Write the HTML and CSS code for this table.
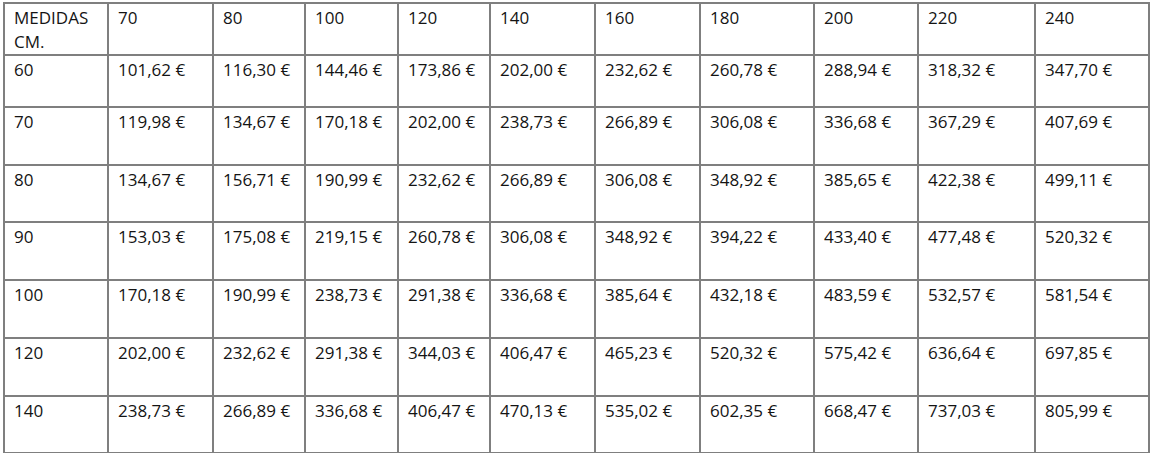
FILE: index.html
```html
<!DOCTYPE html>
<html lang="es">
<head>
<meta charset="utf-8">
<title>Medidas</title>
<link rel="stylesheet" href="styles.css">
</head>
<body>
<table class="prices">
  <colgroup>
    <col class="c104"><col class="c105"><col class="c92"><col class="c93"><col class="c92"><col class="c105"><col class="c105"><col class="c114"><col class="c104"><col class="c117"><col class="c114">
  </colgroup>
  <tr class="h52"><td>MEDIDAS CM.</td><td>70</td><td>80</td><td>100</td><td>120</td><td>140</td><td>160</td><td>180</td><td>200</td><td>220</td><td>240</td></tr>
  <tr class="h52"><td>60</td><td>101,62 €</td><td>116,30 €</td><td>144,46 €</td><td>173,86 €</td><td>202,00 €</td><td>232,62 €</td><td>260,78 €</td><td>288,94 €</td><td>318,32 €</td><td>347,70 €</td></tr>
  <tr class="h58"><td>70</td><td>119,98 €</td><td>134,67 €</td><td>170,18 €</td><td>202,00 €</td><td>238,73 €</td><td>266,89 €</td><td>306,08 €</td><td>336,68 €</td><td>367,29 €</td><td>407,69 €</td></tr>
  <tr class="h57"><td>80</td><td>134,67 €</td><td>156,71 €</td><td>190,99 €</td><td>232,62 €</td><td>266,89 €</td><td>306,08 €</td><td>348,92 €</td><td>385,65 €</td><td>422,38 €</td><td>499,11 €</td></tr>
  <tr class="h58"><td>90</td><td>153,03 €</td><td>175,08 €</td><td>219,15 €</td><td>260,78 €</td><td>306,08 €</td><td>348,92 €</td><td>394,22 €</td><td>433,40 €</td><td>477,48 €</td><td>520,32 €</td></tr>
  <tr class="h58"><td>100</td><td>170,18 €</td><td>190,99 €</td><td>238,73 €</td><td>291,38 €</td><td>336,68 €</td><td>385,64 €</td><td>432,18 €</td><td>483,59 €</td><td>532,57 €</td><td>581,54 €</td></tr>
  <tr class="h58"><td>120</td><td>202,00 €</td><td>232,62 €</td><td>291,38 €</td><td>344,03 €</td><td>406,47 €</td><td>465,23 €</td><td>520,32 €</td><td>575,42 €</td><td>636,64 €</td><td>697,85 €</td></tr>
  <tr class="h57"><td>140</td><td>238,73 €</td><td>266,89 €</td><td>336,68 €</td><td>406,47 €</td><td>470,13 €</td><td>535,02 €</td><td>602,35 €</td><td>668,47 €</td><td>737,03 €</td><td>805,99 €</td></tr>
</table>
</body>
</html>
```
FILE: styles.css
```css
html, body {
  margin: 0;
  padding: 0;
  background: #ffffff;
}
body {
  padding: 2px 0 0 3px;
  font-family: "Open Sans", "Liberation Sans", sans-serif;
  font-size: 17px;
  color: #141414;
}
.prices {
  border-collapse: collapse;
  table-layout: fixed;
  width: 1145px;
}
.prices td {
  border: 2px solid #7f7f7f;
  vertical-align: top;
  padding: 2px 8px 0 9px;
  line-height: 24px;
  overflow: hidden;
}
.c92 { width: 92px; }
.c93 { width: 93px; }
.c104 { width: 104px; }
.c105 { width: 105px; }
.c114 { width: 114px; }
.c117 { width: 117px; }
.h52 { height: 52px; }
.h57 { height: 57px; }
.h58 { height: 58px; }
```
